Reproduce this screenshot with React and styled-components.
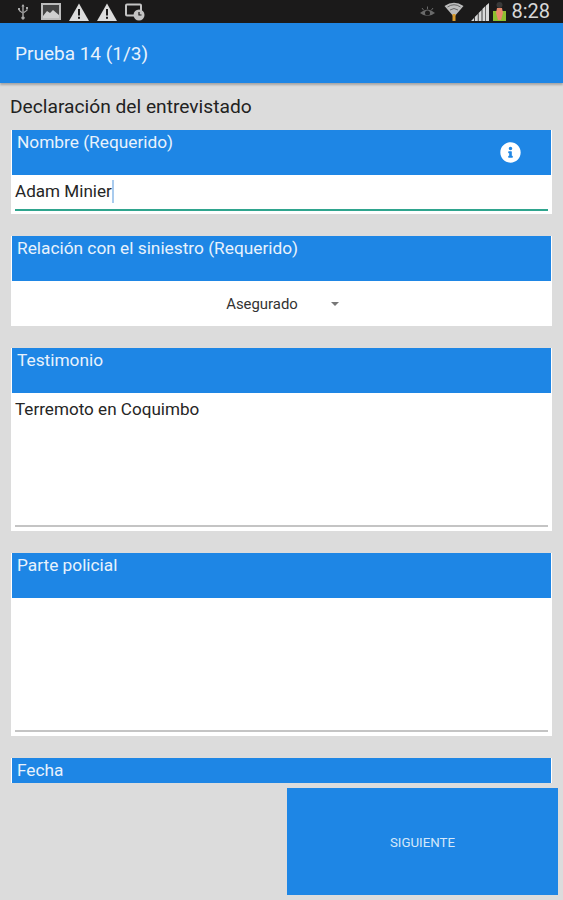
import styled, { createGlobalStyle } from "styled-components";
import { FaInfoCircle } from "react-icons/fa";

const GlobalStyle = createGlobalStyle`
  html, body {
    margin: 0;
    padding: 0;
    background: #dcdcdc;
  }
`;

const Screen = styled.div`
  width: 563px;
  height: 900px;
  display: flex;
  flex-direction: column;
  overflow: hidden;
  background: #dcdcdc;
  font-family: Roboto, "Liberation Sans", sans-serif;
`;

const StatusBar = styled.div`
  height: 23px;
  flex: none;
  display: flex;
  align-items: center;
  background: #1b1a1a;
  padding: 0 13px 0 17px;
`;

const StatusLeft = styled.div`
  display: flex;
  align-items: center;
  gap: 8px;
  flex: 1;
`;

const StatusRight = styled.div`
  display: flex;
  align-items: center;
`;

const StatusIcon = styled.svg`
  flex: none;
  margin-right: ${(p) => p.$gap || 0}px;
`;

const Clock = styled.span`
  color: #d8d8d8;
  font-size: 20px;
  line-height: 23px;
  margin-left: 4px;
`;

const AppBar = styled.header`
  height: 60px;
  flex: none;
  display: flex;
  align-items: center;
  padding: 0 15px;
  background: #1e86e5;
  color: #e8f2fc;
  font-size: 19px;
  box-shadow: 0 2px 2px rgba(0, 0, 0, 0.25);
  z-index: 1;
`;

const Content = styled.main`
  height: 700px;
  flex: none;
  overflow: hidden;
  display: flex;
  flex-direction: column;
  gap: 22px;
  padding: 0 11px;
  box-sizing: border-box;
`;

const Heading = styled.h1`
  margin: 12px 0 -10px -1px;
  height: 23px;
  font-size: 19.2px;
  line-height: 23px;
  font-weight: 400;
  color: #222;
  white-space: nowrap;
`;

const Card = styled.section`
  flex: none;
  background: #fff;
`;

const CardHeader = styled.div`
  height: 45px;
  margin: 0 1px;
  box-sizing: border-box;
  display: flex;
  justify-content: space-between;
  padding: 3px 30px 0 5px;
  background: #1e86e5;
  color: #e8f2fc;
  font-size: 17.3px;
  line-height: 19px;
`;

const InfoIcon = styled(FaInfoCircle)`
  width: 21px;
  height: 21px;
  margin-top: 9px;
  color: #fff;
`;

const TextField = styled.div`
  height: ${(p) => p.$height}px;
  margin: 0 4px ${(p) => p.$bottom}px;
  box-sizing: border-box;
  padding-top: ${(p) => p.$padTop}px;
  border-bottom: 2px solid ${(p) => (p.$focused ? "#2fa58e" : "#c4c4c4")};
  color: #262626;
  font-size: 17.1px;
  line-height: 20px;
`;

const Caret = styled.span`
  display: inline-block;
  width: 2px;
  height: 23px;
  vertical-align: -6px;
  background: #a9cbee;
`;

const SelectRow = styled.div`
  height: 45px;
  display: flex;
  align-items: center;
  justify-content: center;
  padding-left: 2px;
  gap: 33px;
  color: #333;
  font-size: 14.9px;
`;

const SelectArrow = styled.span`
  width: 0;
  height: 0;
  border-left: 4px solid transparent;
  border-right: 4px solid transparent;
  border-top: 4px solid #777;
`;

const Footer = styled.footer`
  flex: 1;
  display: flex;
  justify-content: flex-end;
  padding: 5px 5px 5px 0;
`;

const NextButton = styled.button`
  width: 271px;
  height: 107px;
  padding: 1px 0 0;
  border: none;
  background: #1e86e5;
  color: #d5e8fa;
  font-family: inherit;
  font-size: 13.3px;
`;

function UsbIcon() {
  return (
    <StatusIcon $gap={4} width="12" height="16" viewBox="0 0 12 16" fill="#a8a8a8">
      <path d="M5.300 1h1.400v11.500a1.600 1.600 0 1 1-1.400 0z" />
      <path d="M6 0l1.600 2.400H4.400z" />
      <path d="M1 4h2v2.200l2.500 2v1.400L1.800 7V6H1zM9 3h2v2H10.500v1.500L6.500 9.500V8.100L9.500 6V5H9z" />
    </StatusIcon>
  );
}

function ImageIcon() {
  return (
    <StatusIcon width="20" height="17" viewBox="0 0 20 17">
      <rect x="1" y="1" width="18" height="15" fill="#444" stroke="#bcbcbc" strokeWidth="2" />
      <path d="M2 13l4-5 3 2 3-3 6 5v3H2z" fill="#cfcfcf" />
    </StatusIcon>
  );
}

function WarningIcon() {
  return (
    <StatusIcon width="20" height="18" viewBox="0 0 20 18">
      <path d="M10 0.500L20 18H0z" fill="#dcdcdc" />
      <rect x="9" y="6" width="2" height="6.500" fill="#1b1a1a" />
      <rect x="9" y="13.800" width="2" height="2" fill="#1b1a1a" />
    </StatusIcon>
  );
}

function ScreenClockIcon() {
  return (
    <StatusIcon width="20" height="18" viewBox="0 0 20 18">
      <rect x="1" y="1.500" width="15" height="11" rx="1" fill="none" stroke="#c4c4c4" strokeWidth="2" />
      <circle cx="14" cy="12" r="5.500" fill="#c4c4c4" />
      <path d="M14 9v3h2.500" fill="none" stroke="#1b1a1a" strokeWidth="1.200" />
    </StatusIcon>
  );
}

function EyeIcon() {
  return (
    <StatusIcon $gap={8} width="17" height="14" viewBox="0 0 17 14">
      <path d="M1 8q7.500-7 15 0q-7.500 6-15 0z" fill="#6a6a6a" />
      <circle cx="8.500" cy="8" r="2.500" fill="#1b1a1a" />
      <path d="M3 3l1.500 2M8.500 1.500v2.500M14 3l-1.500 2" stroke="#6a6a6a" strokeWidth="1" />
    </StatusIcon>
  );
}

function WifiIcon() {
  return (
    <StatusIcon $gap={7} width="20" height="19" viewBox="0 0 20 19">
      <path d="M0.500 4Q10-2.500 19.500 4L10 15z" fill="#bdbdbd" />
      <path d="M3.500 5Q10 0.500 16.500 5M6 8Q10 5 14 8" fill="none" stroke="#666" strokeWidth="1" />
      <rect x="8.500" y="12" width="3" height="7" fill="#d99a2b" />
    </StatusIcon>
  );
}

function SignalIcon() {
  return (
    <StatusIcon $gap={3} width="18" height="18" viewBox="0 0 18 18">
      <path d="M0 18l3-3v3zM3.800 18v-4l3-3v7zM7.600 18V10l3-3v11zM11.400 18V6l3-3v15zM15 18V2.500l3-2.500v18z" fill="#d8d8d8" />
    </StatusIcon>
  );
}

function BatteryIcon() {
  return (
    <StatusIcon width="15" height="19" viewBox="0 0 15 19">
      <rect x="1" y="9" width="13" height="10" fill="#8fbf2f" />
      <circle cx="7.500" cy="3" r="3" fill="#3a3a3a" />
      <path d="M5 6h5l1 5-2 7H6L4 11z" fill="#e9896b" />
    </StatusIcon>
  );
}

function App() {
  return (
    <Screen>
      <GlobalStyle />
      <StatusBar>
        <StatusLeft>
          <UsbIcon />
          <ImageIcon />
          <WarningIcon />
          <WarningIcon />
          <ScreenClockIcon />
        </StatusLeft>
        <StatusRight>
          <EyeIcon />
          <WifiIcon />
          <SignalIcon />
          <BatteryIcon />
          <Clock>8:28</Clock>
        </StatusRight>
      </StatusBar>
      <AppBar>Prueba 14 (1/3)</AppBar>
      <Content>
        <Heading>Declaración del entrevistado</Heading>
        <Card>
          <CardHeader>
            Nombre (Requerido)
            <InfoIcon />
          </CardHeader>
          <TextField $height={36} $bottom={3} $padTop={5} $focused>
            Adam Minier<Caret />
          </TextField>
        </Card>
        <Card>
          <CardHeader>Relación con el siniestro (Requerido)</CardHeader>
          <SelectRow>
            Asegurado
            <SelectArrow />
          </SelectRow>
        </Card>
        <Card>
          <CardHeader>Testimonio</CardHeader>
          <TextField $height={134} $bottom={4} $padTop={6}>
            Terremoto en Coquimbo
          </TextField>
        </Card>
        <Card>
          <CardHeader>Parte policial</CardHeader>
          <TextField $height={134} $bottom={4} $padTop={6} />
        </Card>
        <Card>
          <CardHeader>Fecha</CardHeader>
        </Card>
      </Content>
      <Footer>
        <NextButton>SIGUIENTE</NextButton>
      </Footer>
    </Screen>
  );
}

export default App;
